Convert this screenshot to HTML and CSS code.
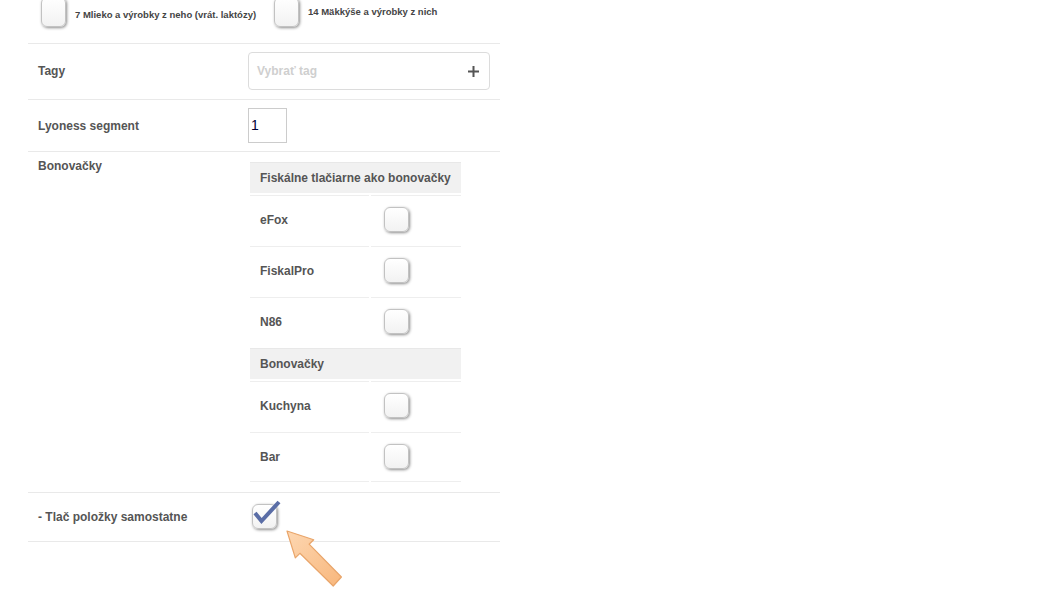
FILE: index.html
```html
<!DOCTYPE html>
<html lang="sk">
<head>
<meta charset="utf-8">
<title>Nastavenia</title>
<link rel="stylesheet" href="styles.css">
</head>
<body>
<div class="form">
  <div class="row row-allergens">
    <div class="allergen-grid">
      <div class="allergen">
        <span class="cb cb-tall"></span>
        <span class="allergen-text at-1">7 Mlieko a výrobky z neho (vrát. laktózy)</span>
      </div>
      <div class="allergen">
        <span class="cb cb-tall"></span>
        <span class="allergen-text at-2">14 Mäkkýše a výrobky z nich</span>
      </div>
    </div>
  </div>

  <div class="row row-center row-tags">
    <div class="label">Tagy</div>
    <div class="value">
      <div class="tag-input">
        <span class="placeholder">Vybrať tag</span>
        <svg class="plus" width="11" height="11" viewBox="0 0 11 11"><path d="M5.5 0V11M0 5.5H11" stroke="#555" stroke-width="2"/></svg>
      </div>
    </div>
  </div>

  <div class="row row-center row-lyoness">
    <div class="label">Lyoness segment</div>
    <div class="value"><div class="num-input">1</div></div>
  </div>

  <div class="row row-printers">
    <div class="label label-top">Bonovačky</div>
    <div class="value">
      <table class="ptable">
        <tr><th colspan="2">Fiskálne tlačiarne ako bonovačky</th></tr>
        <tr><td class="pname">eFox</td><td class="pcb"><span class="cb"></span></td></tr>
        <tr><td class="pname">FiskalPro</td><td class="pcb"><span class="cb"></span></td></tr>
        <tr><td class="pname">N86</td><td class="pcb"><span class="cb"></span></td></tr>
        <tr><th colspan="2">Bonovačky</th></tr>
        <tr><td class="pname">Kuchyna</td><td class="pcb"><span class="cb"></span></td></tr>
        <tr class="last"><td class="pname">Bar</td><td class="pcb"><span class="cb"></span></td></tr>
      </table>
    </div>
  </div>

  <div class="row row-center row-print">
    <div class="label">- Tlač položky samostatne</div>
    <div class="value">
      <span class="cb cb-checked">
        <svg class="check" width="25" height="25" viewBox="0 0 25 25"><path d="M3 9 L9.5 17 L27 -2" fill="none" stroke="#5a6da6" stroke-width="4" stroke-linejoin="miter"/></svg>
      </span>
    </div>
  </div>
</div>

<svg class="arrow" width="360" height="600" viewBox="0 0 360 600">
  <defs>
    <linearGradient id="ag" x1="0" y1="0" x2="1" y2="1">
      <stop offset="0" stop-color="#fdd7b2"/>
      <stop offset="1" stop-color="#f8b77c"/>
    </linearGradient>
  </defs>
  <polygon points="287,531 313.7,539.7 309.1,544.2 341.4,577 333.2,586 299.9,553.3 295.3,557.9" fill="url(#ag)" stroke="#e9a56a" stroke-width="1.2" stroke-linejoin="round"/>
</svg>
</body>
</html>
```

FILE: styles.css
```css
html, body {
  margin: 0;
  padding: 0;
  background: #ffffff;
}

body {
  font-family: "Liberation Sans", Arial, sans-serif;
  color: #555555;
}

.form {
  margin-top: -3px;
  margin-left: 28px;
  width: 472px;
}

.row {
  display: grid;
  grid-template-columns: 210px 1fr;
  padding: 0 10px;
  border-bottom: 1px solid #e9e9e9;
}

.row-center {
  align-items: center;
}

.label {
  font-size: 12px;
  font-weight: bold;
  line-height: 16px;
  color: #555555;
}

.label-top {
  align-self: start;
  margin-top: -2px;
}

/* allergen row (partially scrolled) */
.row-allergens {
  display: block;
  padding: 0 0 16px 13px;
}

.allergen-grid {
  display: grid;
  grid-template-columns: 233px 233px;
}

.allergen {
  display: flex;
  align-items: flex-start;
  gap: 9px;
}

.allergen-text {
  font-size: 9.5px;
  font-weight: bold;
  line-height: 11px;
  color: #444444;
}

.at-1 { margin-top: 12px; }
.at-2 { margin-top: 9px; }

/* checkbox */
.cb {
  display: block;
  position: relative;
  width: 25px;
  height: 25px;
  box-sizing: border-box;
  border: 1px solid #c2c2c2;
  border-radius: 6px;
  background: linear-gradient(#ffffff, #f2f2f2);
  box-shadow: 1px 1px 3px rgba(0, 0, 0, 0.45);
}

.cb-tall {
  height: 30px;
}

.check {
  position: absolute;
  left: -1px;
  top: -1px;
  overflow: visible;
}

/* tags */
.row-tags {
  padding-top: 8px;
  padding-bottom: 9px;
}

.tag-input {
  height: 38px;
  box-sizing: border-box;
  border: 1px solid #dcdcdc;
  border-radius: 4px;
  display: flex;
  align-items: center;
  justify-content: space-between;
  padding: 0 10px 0 8px;
}

.placeholder {
  font-size: 12px;
  font-weight: bold;
  color: #cfcfcf;
}

.plus {
  display: block;
}

/* lyoness */
.row-lyoness {
  padding-top: 8px;
  padding-bottom: 8px;
}

.num-input {
  width: 39px;
  height: 35px;
  box-sizing: border-box;
  border: 1px solid #cccccc;
  padding-left: 2px;
  font-size: 14px;
  line-height: 33px;
  color: #000033;
}

/* printers */
.row-printers {
  padding-top: 8px;
  padding-bottom: 8px;
}

.ptable {
  border-collapse: separate;
  border-spacing: 2px;
  width: 215px;
  font-size: 12px;
  font-weight: bold;
  color: #555555;
}

.ptable th {
  text-align: left;
  font-weight: bold;
  background: #f1f1f1;
  border-top: 1px solid #e8e8e8;
  padding: 7px 10px;
  line-height: 16px;
}

.ptable td {
  border-top: 1px solid #eeeeee;
  vertical-align: middle;
}

.ptable tr.last td {
  border-bottom: 1px solid #eeeeee;
}

.pname {
  width: 98px;
  padding: 0 10px;
  line-height: 16px;
}

.pcb {
  width: 63px;
  padding: 11px 14px 12px 13px;
}

/* print separately */
.row-print {
  padding-top: 11px;
  padding-bottom: 12px;
}

.cb-checked {
  margin-left: 4px;
}

.arrow {
  position: absolute;
  left: 0;
  top: 0;
  pointer-events: none;
}
```
